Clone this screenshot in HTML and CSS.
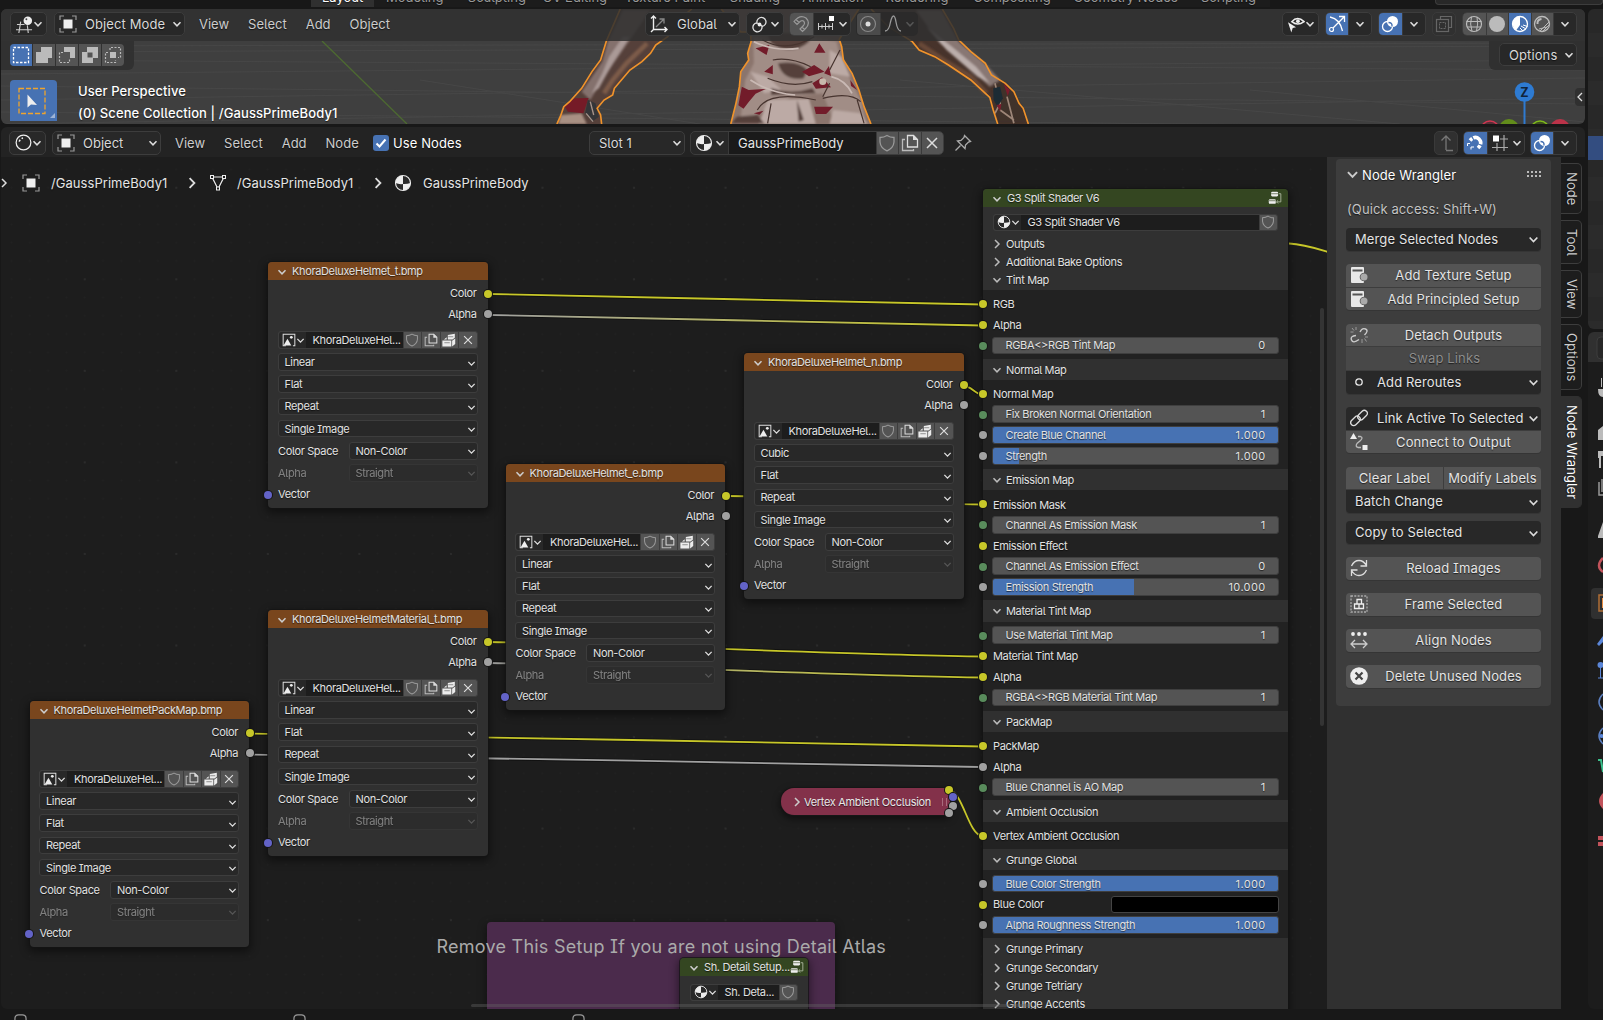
FILE: index.html
```html
<!DOCTYPE html>
<html lang="en">
<head>
<meta charset="utf-8">
<title>Shader Editor</title>
<link rel="stylesheet" href="styles.css">
</head>
<body>
<svg class="defs" width="0" height="0">
  <symbol id="chev" viewBox="0 0 10 10"><path d="M1.500 3.200 5 6.800 8.500 3.200" fill="none" stroke="currentColor" stroke-width="1.500"/></symbol>
  <symbol id="chevR" viewBox="0 0 10 10"><path d="M3 1 7 5 3 9" fill="none" stroke="currentColor" stroke-width="1.500"/></symbol>
  <symbol id="chevL" viewBox="0 0 10 10"><path d="M7 1 3 5 7 9" fill="none" stroke="currentColor" stroke-width="1.300"/></symbol>
  <symbol id="obj" viewBox="0 0 18 18"><path d="M1 5V1h4M13 1h4v4M17 13v4h-4M5 17H1v-4" fill="none" stroke="#999" stroke-width="1.200"/><rect x="4.500" y="4.500" width="9" height="9" fill="#eee"/></symbol>
  <symbol id="mesh" viewBox="0 0 18 18"><path d="M3 3h12L9 15z" fill="none" stroke="#eee" stroke-width="1.200"/><g fill="#1d1d1d" stroke="#eee"><rect x="1.500" y="1.500" width="3" height="3"/><rect x="13.500" y="1.500" width="3" height="3"/><rect x="7.500" y="13" width="3" height="3"/></g></symbol>
  <symbol id="mat" viewBox="0 0 18 18"><circle cx="9" cy="9" r="7.500" fill="#2a2a2a" stroke="#e8e8e8" stroke-width="1.200"/><path d="M9 1.500A7.500 7.500 0 0 0 1.500 9Q5 10.500 9 10zM9 10v6.500A7.500 7.500 0 0 0 16.500 9Q13 10.300 9 10z" fill="#eee"/></symbol>
  <symbol id="ring" viewBox="0 0 18 18"><circle cx="9" cy="9" r="7.800" fill="none" stroke="#eee" stroke-width="1.300"/><path d="M4.500 8A5 5 0 0 1 5.500 6M7 4.800A5 5 0 0 1 8.500 4.200" fill="none" stroke="#eee" stroke-width="1.600"/></symbol>
  <symbol id="grid3d" viewBox="0 0 18 18"><path d="M1 9h8M0 14.500h17M5 6 3 18M12 10l1 8" fill="none" stroke="#ccc" stroke-width="1.200"/><circle cx="12.500" cy="5" r="4.500" fill="#eee"/><circle cx="11" cy="3.500" r="1" fill="#444"/></symbol>
  <symbol id="shield" viewBox="0 0 18 18"><path d="M9 1.500Q12 3.500 16 3.500V8Q15.500 14 9 16.800 2.500 14 2 8V3.500Q6 3.500 9 1.500z" fill="none" stroke="#999" stroke-width="1.300"/></symbol>
  <symbol id="copy" viewBox="0 0 18 18"><path d="M6.500 1.500h6l4 4v7.500h-10z" fill="none" stroke="#ddd" stroke-width="1.300"/><path d="M12 1v5h5z" fill="#ddd"/><path d="M4 5.500H1.500v11h11V15" fill="none" stroke="#bbb" stroke-width="1.300"/></symbol>
  <symbol id="pack" viewBox="0 0 18 18"><path d="M7.500 2.500 16.500 1v5l-3 2.500h-6zM.5 9.500h11.500v8H.5zM13 10l4-3v7l-4 3.500zM2.500 8.500l3.500-3v3z" fill="#ececec"/><path d="M8 4.800h6.500M3 12.500h7" stroke="#777"/></symbol>
  <symbol id="x" viewBox="0 0 18 18"><path d="m4 4 10 10M14 4 4 14" stroke="#ddd" stroke-width="1.500"/></symbol>
  <symbol id="img" viewBox="0 0 18 18"><path d="M5 16.500H1.500v-15h15v15H14" fill="none" stroke="#ddd" stroke-width="1.300"/><path d="M2 16 7 7.500l5 8.500z" fill="#eee"/><circle cx="12" cy="5.500" r="1.800" fill="#eee"/></symbol>
  <symbol id="group" viewBox="0 0 18 18"><rect x="4" y="1" width="9" height="6" rx="1.500" fill="#eee"/><rect x="1" y="10.500" width="9" height="6" rx="1.500" fill="#eee"/><path d="M4 3.500h9M1 12.500h9" stroke="#344621" stroke-width=".8"/><path d="M14 3.500h2.500v10.500H11m2-2-2 2 2 2" fill="none" stroke="#aab59c" stroke-width="1.200"/></symbol>
  <symbol id="pin" viewBox="0 0 18 18"><path d="m10.500 1.500 6 6-2 .5-3 3-.5 3.500-7.500-7.500L7 6.500l3-3zM6.500 11.500 1.500 16.500" fill="none" stroke="#aaa" stroke-width="1.300"/></symbol>
  <symbol id="axes" viewBox="0 0 18 18"><path d="M3.500 1v13.500H17M1 3.500 3.500 1 6 3.500M14.500 12 17 14.500 14.500 17M1 17l2.500-2.500" fill="none" stroke="#eee" stroke-width="1.400"/><path d="m6 12 8-8M9.500 4H14v4.500" fill="none" stroke="#888" stroke-width="1.300"/></symbol>
  <symbol id="pivot" viewBox="0 0 18 18"><path d="M6.800 8.500A4.800 4.800 0 1 1 12 11M11 9.500A4.800 4.800 0 1 1 6 7.200" fill="none" stroke="#ddd" stroke-width="1.400"/><circle cx="9" cy="9" r="2" fill="#eee"/></symbol>
  <symbol id="magnet" viewBox="0 0 18 18"><path d="M2 6.500Q8-1 14 3 19 8 13.500 13.500L10.500 16.500 8 14l3.500-3.500Q13.500 8 11.500 6 9.500 5 7.500 7L5 9.500zM4 4.500 7 7.500M10 12l3 3" fill="none" stroke="currentColor" stroke-width="1.200"/></symbol>
  <symbol id="magnetOn" viewBox="0 0 18 18"><path d="M4 6.500Q9 1 13 5t-1 9" fill="none" stroke="#fff" stroke-width="3.600" stroke-dasharray="3 1.200 12 1.200 5"/><path d="M1.500 12V9.500H4M5 15.500v-2.500h3" fill="none" stroke="#fff"/></symbol>
  <symbol id="incr" viewBox="0 0 18 18"><path d="M1 11.500h15M1.500 8v7M5 9.500v4M8.500 8v7M12 9.500v4M15.500 8v7" stroke="#ccc" fill="none"/><rect x="12" y="1" width="5" height="5" fill="#fff"/></symbol>
  <symbol id="prop" viewBox="0 0 18 18"><circle cx="9" cy="9" r="7.500" fill="none" stroke="#888" stroke-width="1.200"/><circle cx="9" cy="9" r="2.500" fill="#ddd"/></symbol>
  <symbol id="falloff" viewBox="0 0 18 18"><path d="M1 16Q5 16 6.500 7 8 1 9.500 1T12 7Q13.500 16 17 16" fill="none" stroke="#999" stroke-width="1.300"/></symbol>
  <symbol id="eye" viewBox="0 0 18 18"><path d="M4 6Q10-.5 17 6 10 11 4 6z" fill="none" stroke="#eee" stroke-width="1.600"/><circle cx="10.500" cy="5.500" r="2" fill="#eee"/><path d="M0 6.500 8.500 12l-3.500.8L3.500 17.500z" fill="#eee"/></symbol>
  <symbol id="gizmo" viewBox="0 0 18 18"><path d="M2 2Q12 4 14.500 16M4 14 16 2M11 1.500h5.500V7" fill="none" stroke="#fff" stroke-width="1.300"/><circle cx="3.500" cy="14.500" r="2" fill="#4772b3" stroke="#fff" stroke-width="1.200"/></symbol>
  <symbol id="over" viewBox="0 0 18 18"><circle cx="11.500" cy="6.500" r="5.500" fill="#fff"/><circle cx="6.500" cy="11.500" r="5" fill="none" stroke="#fff" stroke-width="1.300"/><path d="M7.500 7.500Q11.500 7.500 11 11.500" fill="none" stroke="#4772b3" stroke-width="1.400"/></symbol>
  <symbol id="xray" viewBox="0 0 18 18"><path d="M5.500 4V1.500h11v11H14" fill="none" stroke="#666" stroke-width="1.200"/><rect x="1.500" y="4.500" width="12" height="12" fill="none" stroke="#666" stroke-width="1.200"/><rect x="4.500" y="7.500" width="6" height="6" fill="none" stroke="#666" stroke-dasharray="2 1"/></symbol>
  <symbol id="wire" viewBox="0 0 18 18"><circle cx="9" cy="9" r="7.500" fill="none" stroke="#bbb" stroke-width="1.200"/><path d="M1.500 6.500h15M2 12h14M6.500 1.800Q4.500 9 7 16.300M12 2q1.500 7-.5 14" fill="none" stroke="#bbb"/></symbol>
  <symbol id="solid" viewBox="0 0 18 18"><circle cx="9" cy="9" r="8" fill="#bbb"/></symbol>
  <symbol id="matprev" viewBox="0 0 18 18"><circle cx="9" cy="9" r="7.500" fill="none" stroke="#fff" stroke-width="1.300"/><path d="M9 1.500A7.500 7.500 0 0 0 1.500 9Q2 13 5 15.500L9 10z" fill="#fff"/><path d="m10 11 5 3M9 13l3 3M12 10l4.500 1.500" stroke="#fff"/></symbol>
  <symbol id="rend" viewBox="0 0 18 18"><circle cx="9" cy="9" r="7.500" fill="none" stroke="#bbb" stroke-width="1.300"/><path d="M4.500 9Q4 4.500 8.500 4" fill="none" stroke="#bbb" stroke-width="2"/><path d="m7 16 9-9M10 16l6-6M6 14l8-2" stroke="#bbb" stroke-width="1"/></symbol>
  <symbol id="up" viewBox="0 0 18 18"><path d="M9 16V2M4.500 6.500 9 2l4.500 4.500M9 16.500h7" fill="none" stroke="#777" stroke-width="1.300"/></symbol>
  <symbol id="snapgrid" viewBox="0 0 18 18"><path d="M6 17V9M1 13.500h16M13 1v16M9 5h8" fill="none" stroke="#aaa" stroke-width="1.200"/><rect x="2" y="1.500" width="6" height="6" fill="#fff"/></symbol>
  <symbol id="tex" viewBox="0 0 18 18"><rect x="1" y="1" width="13" height="16" rx="1" fill="#e8e8e8"/><path d="M2.500 3.500h10v2h-10z" fill="#555"/><circle cx="14" cy="11" r="4.300" fill="#545454"/><circle cx="14" cy="11" r="3.500" fill="#aaa"/></symbol>
  <symbol id="unlink" viewBox="0 0 18 18"><path d="M10 6Q12 1.500 15.500 3T14.500 9M6 9.500Q0 10 1.500 14T9 13.500" fill="none" stroke="#ccc" stroke-width="1.400"/><path d="M6 1v3M2 2l2 2.500M.5 6h3M12 13v4M14.500 12.500l2 3M15 11h3" stroke="#999"/></symbol>
  <symbol id="dot" viewBox="0 0 18 18"><circle cx="9" cy="9" r="3.200" fill="none" stroke="#e8e8e8" stroke-width="1.300"/></symbol>
  <symbol id="link" viewBox="0 0 18 18"><g fill="none" stroke="#ddd" stroke-width="1.300" transform="rotate(-45 9 9)"><rect x="-1" y="5.500" width="11" height="6" rx="3"/><rect x="8" y="6.500" width="11" height="6" rx="3"/></g></symbol>
  <symbol id="conn" viewBox="0 0 18 18"><path d="M0 6 3.500 0 7 6z" fill="#eee"/><rect x="12.500" y="12" width="5" height="5" fill="#eee"/><path d="M8 3.500h2.500q3 1 0 4L7 10.500q-2 3 1 4h3" fill="none" stroke="#bbb" stroke-width="1.300"/></symbol>
  <symbol id="reload" viewBox="0 0 18 18"><path d="M1.500 7Q4 1.500 9 1.500 13.500 1.500 16.500 6.500M16.500 1v6h-6M16.500 11Q14 16.500 9 16.500 4.500 16.500 1.500 11.500M1.500 17v-6h6" fill="none" stroke="#ddd" stroke-width="1.300"/></symbol>
  <symbol id="frame" viewBox="0 0 18 18"><rect x="1" y="1" width="16" height="16" fill="none" stroke="#aaa" stroke-width="1.300" stroke-dasharray="2 1.300"/><path d="M7 4.500h4.500V9H7zM4.500 9H9v4.500H4.500zM9 9h4.500v4.500H9z" fill="none" stroke="#eee" stroke-width="1.300"/></symbol>
  <symbol id="align" viewBox="0 0 18 18"><g fill="#eee"><circle cx="3" cy="3" r="1.900"/><circle cx="9" cy="3" r="1.900"/><circle cx="15" cy="3" r="1.900"/></g><path d="M1 13h16M5 9l-4 4 4 4M13 9l4 4-4 4" fill="none" stroke="#ccc" stroke-width="1.300"/></symbol>
  <symbol id="del" viewBox="0 0 18 18"><circle cx="9" cy="9" r="8.800" fill="#eee"/><path d="m5.500 5.500 7 7M12.500 5.500l-7 7" stroke="#444" stroke-width="2.200"/></symbol>
  <symbol id="mouse" viewBox="0 0 14 14"><path d="M1 14V5q0-4 4-4h4q4 0 4 4v9" fill="none" stroke="#999" stroke-width="1.300"/></symbol>
</svg>

<div class="app">
  <div class="topbar">
    <div class="ws active w1">Layout</div><div class="ws w2">Modeling</div><div class="ws w3">Sculpting</div><div class="ws w4">UV Editing</div><div class="ws w5">Texture Paint</div><div class="ws w6">Shading</div><div class="ws w7">Animation</div><div class="ws w8">Rendering</div><div class="ws w9">Compositing</div><div class="ws w10">Geometry Nodes</div><div class="ws w11">Scripting</div>
    <div class="scene"></div>
  </div>

  <div class="main">
    <div class="left">
      <section class="viewport">
        <svg class="scene3d" viewBox="1 9 1584 115" width="1584" height="115">
          <defs><filter id="soft" x="-5%" y="-5%" width="110%" height="110%"><feGaussianBlur stdDeviation="3"/></filter></defs>
          <rect x="1" y="9" width="1584" height="115" fill="#3f3f3f"/>
          <g stroke="#474747" stroke-width="1" fill="none">
            <path d="M1 46 1585 43M1 52 1585 46M1 60 1585 70M1 74 1585 60M1 86 1585 104M1 100 1585 78M1 112 1585 128M1 124 1585 98M420 80 700 124M900 80 1400 124M1250 90 1585 122"/>
          </g>
          <path d="M322 41 407 124" stroke="#4d6a31" stroke-width="1.300"/>
          <g transform="translate(530 0) scale(.3444 .3333)">
            <path d="M262 27 240 80 222 122 205 180 180 215 150 265 115 305 98 320 88 350 78 372H208L205 345 195 325 215 300 240 285 245 265 290 210 325 185 350 160 365 135 400 110 430 60 470 27z" fill="#55403a"/>
            <path d="M555 27 612 96H640L642 125 632 160 635 180 612 215 608 260 598 310 583 372H990L970 320 955 270 935 220 910 180 905 140 898 118 955 27z" fill="#8b756d"/>
            <path d="M990 27 1040 80 1110 125 1130 150 1215 195 1280 240 1335 292 1345 330 1358 372H1447L1432 325 1405 275 1380 250 1340 225 1322 190 1280 155 1245 120 1230 85 1197 27z" fill="#47332b"/>
            <g filter="url(#soft)">
              <path d="M270 30 226 125 210 185 150 275 175 300 210 240 250 180 290 120 350 30z" fill="#84716d"/>
              <path d="m270 110-40 60-20 50-30 60 20-15 40-75 50-80z" fill="#aa9a97"/>
              <path d="M340 130 280 190 240 240 215 280" stroke="#7d5b48" stroke-width="14" fill="none"/>
              <path d="M90 345 150 340 165 372H82z" fill="#a89083"/>
              <path d="M648 110 720 130 810 110 890 125 905 190 930 240 960 300 975 370 880 360 850 280 760 290 660 340 610 370 625 240 650 190z" fill="#a18d86"/>
              <path d="M690 300 810 296 830 372H665zM880 330 960 340 980 372H870zM870 150 905 170 930 230 870 220zM640 215 690 230 730 270 680 280z" fill="#bcaaa5"/>
              <path d="M700 130q60 40 110-5l10-25H690zM720 190q60-10 85 20l-10 25q-60 10-75-45zM700 265q60 20 120 0l10 15-130 5zM775 300l20 60-15 5zM600 350l60-5 20 25h-95z" fill="#54413b"/>
              <path d="M1120 30 1190 130 1260 190 1335 260 1365 240 1320 190 1245 125 1195 30z" fill="#887773"/>
              <path d="m1150 80 60 70 90 80 35 20-40-50-70-60z" fill="#bbaeab"/>
              <path d="m1130 130 70 50 80 50 45 50" stroke="#694a38" stroke-width="14" fill="none"/>
              <path d="m1345 250 35-5 25 40 30 50 5 35h-80l-12-50z" fill="#40302b"/>
            </g>
            <path d="M100 318 130 295 170 294 155 340 110 335z" fill="#751b27"/>
            <path d="M168 300 190 310 200 350 180 365 160 340z" fill="#343538"/><path d="m175 305 10 40M163 340l20 25" stroke="#a59289" stroke-width="4"/>
            <g fill="#721c2a"><path d="m655 145 40-10-8 30zM840 130l18 28h-33zM680 215l25-20v28zM790 215l35-20 30 20-45 14zM868 198l-14 22 20 8zM615 260l20 10 50-3-30 14-20 25-15 20-15-10zM820 250l28-18 26 30-44 4zM825 320h55l-20 22h-30zM650 340l28-8-12 12zM930 240l20 30-18-12z"/></g>
            <g fill="none" stroke="#47342f" stroke-width="3.500"><path d="M675 120q70 40 150-10M705 180q50-10 110 20M690 235q70 30 130 10M660 330q30-60 170-30M850 295q80-20 110 10M900 150l-30 60M700 310l-10 60M950 300l20 70M870 250l-20 40"/></g>
            <path d="M650 125q60 30 130 20M640 240q60 40 130 45M875 230q40 10 60 50" fill="none" stroke="#c9b9b4" stroke-width="5"/>
            <circle cx="850" cy="245" r="10" fill="#c7b8ac"/>
            <path d="m1350 250 15 60-15 30M1385 290l20 80M1365 330l40 30" stroke="#9d8678" stroke-width="5" fill="none"/><path d="m1345 265 20-5 8 35-15 25-12-20z" fill="#1c2b34"/><path d="m1375 250 18 20-6 18zM1355 315l14-3-4 22z" fill="#7c1b2c"/>
            <g fill="none" stroke="#f0932b" stroke-width="4.800">
              <path d="M262 27 240 80 222 122 205 180 180 215 150 265 115 305 98 320 88 350 78 372M208 372 205 345 195 325 215 300 240 285 245 265 290 210 325 185 350 160 365 135 400 110 430 60 470 27"/>
              <path d="M555 27 612 96H640L642 125 632 160 635 180 612 215 608 260 598 310 583 372M990 372 970 320 955 270 935 220 910 180 905 140 898 118 955 27"/>
              <path d="M990 27 1040 80 1110 125 1130 150 1175 170 1215 195 1280 240 1335 292 1345 330 1358 372M1447 372 1432 325 1420 310 1405 275 1380 250 1340 225 1322 190 1280 155 1245 120 1230 85 1197 27"/>
            </g>
          </g>
          <path d="M1524.500 92V124" stroke="#2f7ad0" stroke-width="2"/>
          <circle cx="1524.500" cy="92" r="9.800" fill="#2e7bd2"/>
          <circle cx="1490" cy="130" r="9" fill="#5a2f38" stroke="#cf3650" stroke-width="1.500"/><circle cx="1509" cy="129" r="10" fill="#628c1b"/><circle cx="1540" cy="130" r="9" fill="#3e521d" stroke="#7fb91c" stroke-width="1.500"/><circle cx="1560" cy="129" r="10" fill="#bb3349"/>
          <text x="1520.300" y="96.500" class="ztext">Z</text>
        </svg>
        <header class="bar vhead">
          <div class="btn ed"><svg class="i18"><use href="#grid3d"/></svg><svg class="c"><use href="#chev"/></svg></div>
          <div class="btn mode"><svg class="i18"><use href="#obj"/></svg><span>Object Mode</span><svg class="c"><use href="#chev"/></svg></div>
          <nav class="menu vm"><span>View</span><span>Select</span><span>Add</span><span>Object</span></nav>
          <div class="mid">
            <div class="btn glob"><svg class="i18"><use href="#axes"/></svg><span>Global</span><svg class="c"><use href="#chev"/></svg></div>
            <div class="btn piv"><svg class="i18"><use href="#pivot"/></svg><svg class="c"><use href="#chev"/></svg></div>
            <div class="btn seg"><div class="cell g dim"><svg class="i18"><use href="#magnet"/></svg></div><div class="cell w38"><svg class="i18"><use href="#incr"/></svg><svg class="c"><use href="#chev"/></svg></div></div>
            <div class="btn seg fade"><div class="cell g"><svg class="i18"><use href="#prop"/></svg></div><div class="cell w38"><svg class="i18"><use href="#falloff"/></svg><svg class="c"><use href="#chev"/></svg></div></div>
          </div>
          <div class="vright">
            <div class="btn ed"><svg class="i18"><use href="#eye"/></svg><svg class="c"><use href="#chev"/></svg></div>
            <div class="btn seg"><div class="cell b"><svg class="i18"><use href="#gizmo"/></svg></div><div class="cell w24"><svg class="c"><use href="#chev"/></svg></div></div>
            <div class="btn seg"><div class="cell b"><svg class="i18"><use href="#over"/></svg></div><div class="cell w24"><svg class="c"><use href="#chev"/></svg></div></div>
            <div class="btn seg xr"><div class="cell"><svg class="i18"><use href="#xray"/></svg></div></div>
            <div class="btn seg"><div class="cell g"><svg class="i18"><use href="#wire"/></svg></div><div class="cell g"><svg class="i18"><use href="#solid"/></svg></div><div class="cell b"><svg class="i18"><use href="#matprev"/></svg></div><div class="cell g"><svg class="i18"><use href="#rend"/></svg></div><div class="cell w24"><svg class="c"><use href="#chev"/></svg></div></div>
          </div>
        </header>
        <div class="vtools">
          <div class="selmodes">
            <div class="sm on"><svg class="i18" viewBox="0 0 18 18"><rect x="1.500" y="1.500" width="15" height="15" fill="none" stroke="#fff" stroke-width="1.300" stroke-dasharray="2.500 1.500"/></svg></div>
            <div class="sm"><svg class="i18" viewBox="0 0 18 18"><path d="M6 1h11v11h-4v5H1V6h5z" fill="#bbb"/></svg></div>
            <div class="sm"><svg class="i18" viewBox="0 0 18 18"><path d="M6 1h11v11h-5V6H6z" fill="#bbb"/><path d="M5 6.500H1.500v10h10V13" fill="none" stroke="#bbb" stroke-width="1.200" stroke-dasharray="2 1.500"/></svg></div>
            <div class="sm"><svg class="i18" viewBox="0 0 18 18"><path fill-rule="evenodd" d="M6 1h11v11h-5v5H1V6h5zM6.500 6.500v5h5v-5z" fill="#bbb"/></svg></div>
            <div class="sm"><svg class="i18" viewBox="0 0 18 18"><path d="M6 6h6v6H6z" fill="#bbb"/><path d="M6 4V1.500h10.500v10H14M4 6.500H1.500v10h10V14" fill="none" stroke="#bbb" stroke-width="1.200" stroke-dasharray="2 1.500"/></svg></div>
          </div>
          <div class="opts"><div class="btn"><span>Options</span><svg class="c"><use href="#chev"/></svg></div></div>
        </div>
        <div class="vinfo">
          <div class="tool"><svg width="47" height="40" viewBox="0 0 47 40"><rect x="9" y="8.500" width="26" height="25" fill="none" stroke="#f0a42c" stroke-width="1.300" stroke-dasharray="5 2"/><path d="M17.500 14.500v13l3.500-3 6 .5z" fill="#eee"/><path d="M45 33v5h-5z" fill="#9db3d6"/></svg></div>
          <div class="persp"><p>User Perspective</p><p>(0) Scene Collection | /GaussPrimeBody1</p></div>
        </div>
        <div class="npull"><svg class="c"><use href="#chevL"/></svg></div>
      </section>

      <section class="editor">
        <header class="bar nhead">
          <div class="btn ed"><svg class="i18"><use href="#ring"/></svg><svg class="c"><use href="#chev"/></svg></div>
          <div class="btn objsel"><svg class="i18"><use href="#obj"/></svg><span>Object</span><svg class="c"><use href="#chev"/></svg></div>
          <nav class="menu nm"><span>View</span><span>Select</span><span>Add</span><span>Node</span></nav>
          <div class="check"><svg width="16" height="16" viewBox="0 0 16 16"><path d="m3.500 8.500 3 3 6-7" fill="none" stroke="#fff" stroke-width="2"/></svg></div><span class="bright">Use Nodes</span>
          <div class="btn slot"><span>Slot 1</span><svg class="c"><use href="#chev"/></svg></div>
          <div class="btn seg matsel"><div class="cell w37"><svg class="i18"><use href="#mat"/></svg><svg class="c"><use href="#chev"/></svg></div><div class="cell name">GaussPrimeBody</div><div class="cell g"><svg class="i18"><use href="#shield"/></svg></div><div class="cell g"><svg class="i18"><use href="#copy"/></svg></div><div class="cell g"><svg class="i18"><use href="#x"/></svg></div></div>
          <svg class="i18 pinic"><use href="#pin"/></svg>
          <div class="nright">
            <div class="btn seg xr"><div class="cell"><svg class="i18"><use href="#up"/></svg></div></div>
            <div class="btn seg"><div class="cell b"><svg class="i18"><use href="#magnetOn"/></svg></div><div class="cell w38"><svg class="i18"><use href="#snapgrid"/></svg><svg class="c"><use href="#chev"/></svg></div></div>
            <div class="btn seg"><div class="cell b"><svg class="i18"><use href="#over"/></svg></div><div class="cell w24"><svg class="c"><use href="#chev"/></svg></div></div>
          </div>
        </header>

        <div class="nbody">
          <div class="canvas">
            <div class="crumbs"><svg class="c"><use href="#chevR"/></svg><svg class="i18 k1"><use href="#obj"/></svg><span class="t1">/GaussPrimeBody1</span><svg class="cr"><use href="#chevR"/></svg><svg class="i18 k2"><use href="#mesh"/></svg><span class="t1">/GaussPrimeBody1</span><svg class="cr"><use href="#chevR"/></svg><svg class="i18 k3"><use href="#mat"/></svg><span>GaussPrimeBody</span></div>

            <div class="nframe"></div>
            <svg class="links" viewBox="1 157 1326 852" width="1326" height="852">
              <defs><linearGradient id="mix" gradientUnits="userSpaceOnUse" x1="488" y1="0" x2="983" y2="0"><stop offset="0" stop-color="#a1a1a1"/><stop offset="1" stop-color="#c7c729"/></linearGradient></defs>
              <g fill="none" stroke="#111" stroke-width="3.500"><path d="M488 294C600 295 870 303.500 982 304.500M488 315C600 316 870 324.500 982 325.500M964 385.500C972 387 975 394 982 394.500M725 496C800 496.500 900 504 982 504.500M488 642C600 643.500 870 655.500 982 656.500M488 663C600 664.500 870 676.500 982 677.500M249 733.500C400 734.500 800 744 982 746.500M249 754.500C400 755.500 800 764.500 982 767"/></g>
              <g fill="none" stroke="#c7c729" stroke-width="1.800">
                <path d="M488 294C600 295 870 303.500 982 304.500"/><path d="M488 315C600 316 870 324.500 982 325.500" stroke="url(#mix)"/>
                <path d="M964 385.500C972 387 975 394 982 394.500M725 496C800 496.500 900 504 982 504.500M488 642C600 643.500 870 655.500 982 656.500M249 733.500C400 734.500 800 744 982 746.500M949 790C963 792 968 834 982 836M1289 243.500C1303 244 1315 248 1328 252"/>
                <path d="M488 663C600 664.500 870 676.500 982 677.500" stroke="url(#mix)"/>
                <path d="M249 754.500C400 755.500 800 764.500 982 767" stroke="#a1a1a1"/>
              </g>
            </svg>

            <div class="node tex n1">
              <div class="nh"><svg class="c"><use href="#chev"/></svg>KhoraDeluxeHelmet_t.bmp</div>
              <div class="out">Color<i class="s y"></i></div><div class="out">Alpha<i class="s g"></i></div>
              <div class="id"><div class="ic"><svg><use href="#img"/></svg><svg class="c"><use href="#chev"/></svg></div><div class="nm2">KhoraDeluxeHel...</div><div class="ib"><svg><use href="#shield"/></svg></div><div class="ib"><svg><use href="#copy"/></svg></div><div class="ib"><svg><use href="#pack"/></svg></div><div class="ib"><svg><use href="#x"/></svg></div></div>
              <div class="dd">Linear<svg class="c"><use href="#chev"/></svg></div><div class="dd">Flat<svg class="c"><use href="#chev"/></svg></div><div class="dd">Repeat<svg class="c"><use href="#chev"/></svg></div><div class="dd">Single Image<svg class="c"><use href="#chev"/></svg></div>
              <div class="lr"><span>Color Space</span><div class="dd">Non-Color<svg class="c"><use href="#chev"/></svg></div></div>
              <div class="lr off"><span>Alpha</span><div class="dd">Straight<svg class="c"><use href="#chev"/></svg></div></div>
              <div class="in"><i class="s v"></i>Vector</div>
            </div>
            <div class="node tex n2">
              <div class="nh"><svg class="c"><use href="#chev"/></svg>KhoraDeluxeHelmetPackMap.bmp</div>
              <div class="out">Color<i class="s y"></i></div><div class="out">Alpha<i class="s g"></i></div>
              <div class="id"><div class="ic"><svg><use href="#img"/></svg><svg class="c"><use href="#chev"/></svg></div><div class="nm2">KhoraDeluxeHel...</div><div class="ib"><svg><use href="#shield"/></svg></div><div class="ib"><svg><use href="#copy"/></svg></div><div class="ib"><svg><use href="#pack"/></svg></div><div class="ib"><svg><use href="#x"/></svg></div></div>
              <div class="dd">Linear<svg class="c"><use href="#chev"/></svg></div><div class="dd">Flat<svg class="c"><use href="#chev"/></svg></div><div class="dd">Repeat<svg class="c"><use href="#chev"/></svg></div><div class="dd">Single Image<svg class="c"><use href="#chev"/></svg></div>
              <div class="lr"><span>Color Space</span><div class="dd">Non-Color<svg class="c"><use href="#chev"/></svg></div></div>
              <div class="lr off"><span>Alpha</span><div class="dd">Straight<svg class="c"><use href="#chev"/></svg></div></div>
              <div class="in"><i class="s v"></i>Vector</div>
            </div>
            <div class="node tex n3">
              <div class="nh"><svg class="c"><use href="#chev"/></svg>KhoraDeluxeHelmetMaterial_t.bmp</div>
              <div class="out">Color<i class="s y"></i></div><div class="out">Alpha<i class="s g"></i></div>
              <div class="id"><div class="ic"><svg><use href="#img"/></svg><svg class="c"><use href="#chev"/></svg></div><div class="nm2">KhoraDeluxeHel...</div><div class="ib"><svg><use href="#shield"/></svg></div><div class="ib"><svg><use href="#copy"/></svg></div><div class="ib"><svg><use href="#pack"/></svg></div><div class="ib"><svg><use href="#x"/></svg></div></div>
              <div class="dd">Linear<svg class="c"><use href="#chev"/></svg></div><div class="dd">Flat<svg class="c"><use href="#chev"/></svg></div><div class="dd">Repeat<svg class="c"><use href="#chev"/></svg></div><div class="dd">Single Image<svg class="c"><use href="#chev"/></svg></div>
              <div class="lr"><span>Color Space</span><div class="dd">Non-Color<svg class="c"><use href="#chev"/></svg></div></div>
              <div class="lr off"><span>Alpha</span><div class="dd">Straight<svg class="c"><use href="#chev"/></svg></div></div>
              <div class="in"><i class="s v"></i>Vector</div>
            </div>
            <div class="node tex n4">
              <div class="nh"><svg class="c"><use href="#chev"/></svg>KhoraDeluxeHelmet_e.bmp</div>
              <div class="out">Color<i class="s y"></i></div><div class="out">Alpha<i class="s g"></i></div>
              <div class="id"><div class="ic"><svg><use href="#img"/></svg><svg class="c"><use href="#chev"/></svg></div><div class="nm2">KhoraDeluxeHel...</div><div class="ib"><svg><use href="#shield"/></svg></div><div class="ib"><svg><use href="#copy"/></svg></div><div class="ib"><svg><use href="#pack"/></svg></div><div class="ib"><svg><use href="#x"/></svg></div></div>
              <div class="dd">Linear<svg class="c"><use href="#chev"/></svg></div><div class="dd">Flat<svg class="c"><use href="#chev"/></svg></div><div class="dd">Repeat<svg class="c"><use href="#chev"/></svg></div><div class="dd">Single Image<svg class="c"><use href="#chev"/></svg></div>
              <div class="lr"><span>Color Space</span><div class="dd">Non-Color<svg class="c"><use href="#chev"/></svg></div></div>
              <div class="lr off"><span>Alpha</span><div class="dd">Straight<svg class="c"><use href="#chev"/></svg></div></div>
              <div class="in"><i class="s v"></i>Vector</div>
            </div>
            <div class="node tex n5">
              <div class="nh"><svg class="c"><use href="#chev"/></svg>KhoraDeluxeHelmet_n.bmp</div>
              <div class="out">Color<i class="s y"></i></div><div class="out">Alpha<i class="s g"></i></div>
              <div class="id"><div class="ic"><svg><use href="#img"/></svg><svg class="c"><use href="#chev"/></svg></div><div class="nm2">KhoraDeluxeHel...</div><div class="ib"><svg><use href="#shield"/></svg></div><div class="ib"><svg><use href="#copy"/></svg></div><div class="ib"><svg><use href="#pack"/></svg></div><div class="ib"><svg><use href="#x"/></svg></div></div>
              <div class="dd">Cubic<svg class="c"><use href="#chev"/></svg></div><div class="dd">Flat<svg class="c"><use href="#chev"/></svg></div><div class="dd">Repeat<svg class="c"><use href="#chev"/></svg></div><div class="dd">Single Image<svg class="c"><use href="#chev"/></svg></div>
              <div class="lr"><span>Color Space</span><div class="dd">Non-Color<svg class="c"><use href="#chev"/></svg></div></div>
              <div class="lr off"><span>Alpha</span><div class="dd">Straight<svg class="c"><use href="#chev"/></svg></div></div>
              <div class="in"><i class="s v"></i>Vector</div>
            </div>

            <div class="vao"><svg class="c"><use href="#chevR"/></svg><span>Vertex Ambient Occlusion</span><b></b><i class="s y a1"></i><i class="s v a2"></i><i class="s g a3"></i><i class="s g a4"></i></div>

            <div class="node det">
              <div class="nh gh"><svg class="c"><use href="#chev"/></svg>Sh. Detail Setup...<svg class="gi"><use href="#group"/></svg></div>
              <div class="id"><div class="ic"><svg><use href="#mat"/></svg><svg class="c"><use href="#chev"/></svg></div><div class="nm2">Sh. Deta...</div><div class="ib"><svg><use href="#shield"/></svg></div></div>
            </div>
            <div class="ftitle">Remove This Setup If you are not using Detail Atlas</div>

            <div class="node shader">
              <div class="nh gh"><svg class="c"><use href="#chev"/></svg>G3 Split Shader V6<svg class="gi"><use href="#group"/></svg></div>
              <div class="id"><div class="ic"><svg><use href="#mat"/></svg><svg class="c"><use href="#chev"/></svg></div><div class="nm2">G3 Split Shader V6</div><div class="ib"><svg><use href="#shield"/></svg></div></div>
              <div class="fold"><svg class="c"><use href="#chevR"/></svg>Outputs</div>
              <div class="fold"><svg class="c"><use href="#chevR"/></svg>Additional Bake Options</div>
              <div class="ph first"><svg class="c"><use href="#chev"/></svg>Tint Map</div>
              <div class="pb">
                <div class="r"><i class="s y"></i>RGB</div><div class="r"><i class="s y"></i>Alpha</div>
                <div class="r"><i class="s n"></i><div class="f"><span>RGBA&lt;&gt;RGB Tint Map</span><span>0</span></div></div>
              </div>
              <div class="ph"><svg class="c"><use href="#chev"/></svg>Normal Map</div>
              <div class="pb">
                <div class="r"><i class="s y"></i>Normal Map</div>
                <div class="r"><i class="s n"></i><div class="f"><span>Fix Broken Normal Orientation</span><span>1</span></div></div>
                <div class="r"><i class="s g"></i><div class="f full"><span>Create Blue Channel</span><span>1.000</span></div></div>
                <div class="r"><i class="s g"></i><div class="f p9"><span>Strength</span><span>1.000</span></div></div>
              </div>
              <div class="ph"><svg class="c"><use href="#chev"/></svg>Emission Map</div>
              <div class="pb">
                <div class="r"><i class="s y"></i>Emission Mask</div>
                <div class="r"><i class="s n"></i><div class="f"><span>Channel As Emission Mask</span><span>1</span></div></div>
                <div class="r"><i class="s y"></i>Emission Effect</div>
                <div class="r"><i class="s n"></i><div class="f"><span>Channel As Emission Effect</span><span>0</span></div></div>
                <div class="r"><i class="s g"></i><div class="f p50"><span>Emission Strength</span><span>10.000</span></div></div>
              </div>
              <div class="ph"><svg class="c"><use href="#chev"/></svg>Material Tint Map</div>
              <div class="pb">
                <div class="r"><i class="s n"></i><div class="f"><span>Use Material Tint Map</span><span>1</span></div></div>
                <div class="r"><i class="s y"></i>Material Tint Map</div><div class="r"><i class="s y"></i>Alpha</div>
                <div class="r"><i class="s n"></i><div class="f"><span>RGBA&lt;&gt;RGB Material Tint Map</span><span>1</span></div></div>
              </div>
              <div class="ph"><svg class="c"><use href="#chev"/></svg>PackMap</div>
              <div class="pb">
                <div class="r"><i class="s y"></i>PackMap</div><div class="r"><i class="s g"></i>Alpha</div>
                <div class="r"><i class="s n"></i><div class="f"><span>Blue Channel is AO Map</span><span>1</span></div></div>
              </div>
              <div class="ph"><svg class="c"><use href="#chev"/></svg>Ambient Occlusion</div>
              <div class="pb"><div class="r"><i class="s y"></i>Vertex Ambient Occlusion</div></div>
              <div class="ph"><svg class="c"><use href="#chev"/></svg>Grunge Global</div>
              <div class="pb">
                <div class="r"><i class="s g"></i><div class="f full"><span>Blue Color Strength</span><span>1.000</span></div></div>
                <div class="r"><i class="s y"></i>Blue Color<div class="swatch"></div></div>
                <div class="r"><i class="s g"></i><div class="f full"><span>Alpha Roughness Strength</span><span>1.000</span></div></div>
              </div>
              <div class="fold"><svg class="c"><use href="#chevR"/></svg>Grunge Primary</div>
              <div class="fold"><svg class="c"><use href="#chevR"/></svg>Grunge Secondary</div>
              <div class="fold"><svg class="c"><use href="#chevR"/></svg>Grunge Tetriary</div>
              <div class="fold"><svg class="c"><use href="#chevR"/></svg>Grunge Accents</div>
            </div>
            <div class="sbv"></div><div class="sbh"></div>
          </div>

          <aside class="side">
            <div class="panel">
              <div class="pt"><svg class="pc"><use href="#chev"/></svg>Node Wrangler<span class="grip"></span></div>
              <p>(Quick access: Shift+W)</p>
              <div class="grp"><div class="pr dk"><span>Merge Selected Nodes</span><svg class="c"><use href="#chev"/></svg></div></div>
              <div class="grp"><div class="pr"><svg class="i18"><use href="#tex"/></svg><em>Add Texture Setup</em></div><div class="pr"><svg class="i18"><use href="#tex"/></svg><em>Add Principled Setup</em></div></div>
              <div class="grp"><div class="pr"><svg class="i18"><use href="#unlink"/></svg><em>Detach Outputs</em></div><div class="pr dis"><em>Swap Links</em></div><div class="pr dk"><svg class="i18"><use href="#dot"/></svg><span>Add Reroutes</span><svg class="c"><use href="#chev"/></svg></div></div>
              <div class="grp"><div class="pr dk"><svg class="i18"><use href="#link"/></svg><span>Link Active To Selected</span><svg class="c"><use href="#chev"/></svg></div><div class="pr"><svg class="i18"><use href="#conn"/></svg><em>Connect to Output</em></div></div>
              <div class="grp"><div class="two"><div class="pr"><em>Clear Label</em></div><div class="pr"><em>Modify Labels</em></div></div><div class="pr dk"><span>Batch Change</span><svg class="c"><use href="#chev"/></svg></div></div>
              <div class="grp near"><div class="pr dk"><span>Copy to Selected</span><svg class="c"><use href="#chev"/></svg></div></div>
              <div class="grp"><div class="pr"><svg class="i18"><use href="#reload"/></svg><em>Reload Images</em></div></div>
              <div class="grp"><div class="pr"><svg class="i18"><use href="#frame"/></svg><em>Frame Selected</em></div></div>
              <div class="grp"><div class="pr"><svg class="i18"><use href="#align"/></svg><em>Align Nodes</em></div></div>
              <div class="grp"><div class="pr"><svg class="i18"><use href="#del"/></svg><em>Delete Unused Nodes</em></div></div>
            </div>
          </aside>
          <div class="tabs"><div class="tb b1">Node</div><div class="tb b2">Tool</div><div class="tb b3">View</div><div class="tb b4">Options</div><div class="tb b5">Node Wrangler</div></div>
        </div>
      </section>
    </div>

    <div class="right">
      <div class="outliner"><div class="orow"></div></div>
      <div class="props">
        <svg width="15" height="677" viewBox="0 0 15 677">
          <rect width="15" height="30" fill="#303030"/><rect x="9" y="5" width="20" height="22" rx="4" fill="#282828" stroke="#3d3d3d"/>
          <rect x="3" y="256" width="14" height="31" rx="4" fill="#303030"/>
          <g fill="#bbb"><path d="M14 46v9h-1v-9zM10 57h5v8q-5 0-5-8zM10 98l5-4v14h-5zM10 119h5v5h-2v12h-2v-10h-1zM10 204 15 190v16h-5z"/></g>
          <path d="M11 150v13h4M14 147v13" fill="none" stroke="#999" stroke-width="1.500"/>
          <path d="M15 226q-8 8 0 14" fill="none" stroke="#c2535b" stroke-width="2.500"/>
          <path d="M15 263h-4v16h4" fill="none" stroke="#b06e35" stroke-width="1.500"/><rect x="14" y="266" width="1" height="10" fill="#e98d42"/>
          <path d="m9 312 6-8v6l-4 4z" fill="#5b86d8"/>
          <circle cx="12.500" cy="333" r="3" fill="#5b86d8"/><path d="M12.500 334v12M10 346h5" stroke="#5b86d8" fill="none"/>
          <path d="M15 362q-8 8 0 16M15 396q-8 8 0 16" fill="none" stroke="#5b7fc0" stroke-width="1.500"/><circle cx="13.500" cy="404" r="2" fill="#5b86d8"/>
          <path d="M10 428h3l2 12" fill="none" stroke="#3bc08c" stroke-width="2"/>
          <path d="M15 461q-8 8 0 16z" fill="#c2535b"/><path d="M10 504h5v4h-5zM10 510h5v4h-5z" fill="#c2535b"/>
        </svg>
      </div>
    </div>
  </div>
  <footer class="status"><svg class="mo m1"><use href="#mouse"/></svg><svg class="mo m2"><use href="#mouse"/></svg><svg class="mo m3"><use href="#mouse"/></svg></footer>
</div>
</body>
</html>
```
FILE: styles.css
```css
* { box-sizing: border-box; }
body { margin: 0; background: #181818; overflow: hidden; }
.defs { position: absolute; }
svg { display: block; flex: none; }
.app {
  width: 1603px; height: 1020px; display: flex; flex-direction: column; overflow: hidden;
  font-family: Inter, "Liberation Sans", sans-serif; font-feature-settings: "cv05", "cv08";
  font-size: 13px; color: #d9d9d9; letter-spacing: 0; text-shadow: 0 1px 1px rgba(0,0,0,.6);
}
.i18 { width: 18px; height: 18px; }
.c { width: 10px; height: 10px; color: #ddd; }

.topbar { height: 9px; display: flex; padding-left: 311px; overflow: hidden; flex: none; }
.ws { height: 10px; margin-top: -3px; line-height: 0; display: flex; justify-content: center; color: #999; background: #1c1c1c; white-space: nowrap; }
.ws.active { background: #303030; color: #fff; }
.w1 { width: 64px; } .w2 { width: 82px; } .w3 { width: 84px; } .w4 { width: 74px; } .w5 { width: 108px; } .w6 { width: 74px; } .w7 { width: 84px; } .w8 { width: 86px; } .w9 { width: 106px; } .w10 { width: 124px; } .w11 { width: 84px; }
.scene { width: 170px; height: 5px; margin-left: 165px; background: #282828; border: 1px solid #3d3d3d; border-top: 0; border-radius: 0 0 4px 4px; }

.main { flex: 1; display: flex; gap: 3px; min-height: 0; }
.left { width: 1585px; padding-left: 1px; display: flex; flex-direction: column; gap: 3px; }
.viewport { height: 115px; position: relative; border-radius: 6px; overflow: hidden; flex: none; }
.scene3d { position: absolute; left: 0; top: 0; }
.ztext { font-size: 12.500px; font-weight: 700; fill: #10233b; text-shadow: none; letter-spacing: 0; }
.bar { display: flex; align-items: center; position: relative; }
.vhead { height: 32px; background: rgba(48,48,48,.86); padding: 0 8px 2px 9px; }
.btn { height: 24px; background: #282828; border: 1px solid #3d3d3d; border-radius: 5px; display: flex; align-items: center; white-space: nowrap; flex: none; }
.ed { width: 37px; padding: 0 3px 0 5px; justify-content: space-between; }
.ed .i18, .piv .i18 { width: 17px; height: 17px; }
.mode { width: 131px; margin-left: 7px; padding: 0 2px 0 4px; }
.mode span { margin: 0 auto 0 8px; letter-spacing: .1px; }
.menu { display: flex; color: #ccc; flex: none; }
.vm { margin-left: 14px; gap: 19px; width: 193px; }
.mid { display: flex; gap: 5.500px; margin-left: 253px; }
.glob { width: 95px; padding: 0 2px 0 4px; }
.glob span { margin: 0 auto 0 9px; }
.piv { width: 38px; padding: 0 3px 0 4px; justify-content: space-between; }
.seg { overflow: hidden; }
.cell { height: 22px; width: 22.500px; display: flex; align-items: center; justify-content: center; flex: none; }
.cell + .cell { border-left: 1px solid #3a3a3a; }
.cell.g { background: #545454; } .cell.b { background: #4772b3; }
.dim { color: #999; }
.cell.w38 { width: 37px; justify-content: space-between; padding: 0 2px 0 3px; }
.cell.w24 { width: 23px; } .cell.w37 { width: 37px; justify-content: space-between; padding: 0 3px 0 4px; }
.fade { background: rgba(40,40,40,.7); border-color: transparent; } .fade .c { color: #555; } .fade .cell.g { background: rgba(84,84,84,.8); }
.vright { display: flex; gap: 6px; margin-left: auto; }
.xr { background: #303030; border-color: #3a3a3a; }
.vtools { display: flex; justify-content: space-between; height: 29px; position: relative; }
.selmodes { display: flex; gap: 1px; background: rgba(48,48,48,.9); width: 133px; height: 29px; padding: 3px 0 3px 9px; border-radius: 0 0 6px 0; }
.sm { width: 22px; height: 22px; background: #545454; display: flex; align-items: center; justify-content: center; }
.sm.on { background: #4772b3; border-radius: 4px 0 0 4px; } .sm:last-child { border-radius: 0 4px 4px 0; }
.opts { width: 96px; background: #303030; padding: 2px 8px 0 10px; border-radius: 0 0 0 6px; }
.opts .btn { width: 78px; height: 23px; padding: 0 2px 0 9px; justify-content: space-between; letter-spacing: .1px; }
.vinfo { display: flex; position: relative; padding: 10px 0 0 9px; }
.tool { width: 47px; height: 41px; background: #4772b3; border-radius: 4px 4px 0 0; }
.persp { margin: 0 0 0 21px; color: #fff; }
.persp p { margin: 0; height: 22px; line-height: 22px; letter-spacing: .1px; font-weight: 500; }
.npull { position: absolute; right: 0; top: 79px; width: 10px; height: 18px; background: #303030; border-radius: 4px 0 0 4px; display: flex; align-items: center; }

.editor { flex: 1; display: flex; flex-direction: column; border-radius: 6px 6px 0 6px; overflow: hidden; background: #1d1d1d; min-height: 0; }
.nhead { height: 30px; background: #232323; padding: 1px 8px 0 8px; flex: none; }
.objsel { width: 109px; margin-left: 6px; padding: 0 2px 0 4px; }
.objsel span { margin: 0 auto 0 8px; }
.nm { margin-left: 14px; gap: 19px; width: 184px; }
.check { width: 16px; height: 16px; background: #4772b3; border-radius: 3px; margin: 0 4px 0 14px; flex: none; }
.bright { color: #fff; width: 196px; letter-spacing: .1px; }
.slot { width: 96px; padding: 0 2px 0 9px; justify-content: space-between; }
.matsel { width: 254px; margin-left: 5px; }
.matsel .name { flex: 1; background: #1a1a1a; justify-content: flex-start; padding-left: 9px; color: #e5e5e5; }
.pinic { margin-left: 10px; }
.nright { display: flex; gap: 5px; margin-left: auto; }
.nbody { flex: 1; display: flex; min-height: 0; }
.canvas {
  width: 1326px; position: relative; overflow: hidden; background-color: #1d1d1d;
  background-image: radial-gradient(circle, #2b2b2b 1px, transparent 1.500px), radial-gradient(circle, #212121 .7px, transparent 1.200px);
  background-size: 91.550px 91.550px, 18.310px 18.310px; background-position: 38px -15px, 1.400px 3.300px;
}
.crumbs { display: flex; align-items: center; height: 20px; margin-top: 16px; color: #e5e5e5; }
.crumbs .c { margin-left: -2px; }
.k1 { margin: 0 11px 0 13px; } .t1 { width: 130px; letter-spacing: .05px; } .t1 + .cr { margin-left: 5px; }
.cr { width: 12px; height: 12px; color: #ddd; } .k2 { margin: 0 10px 0 11px; } .k3 { margin: 0 11px 0 10px; }
.links { position: absolute; left: 0; top: 0; }

.node { position: absolute; background: #303030; border-radius: 4px; box-shadow: 0 0 0 1px rgba(20,20,20,.7), 0 3px 8px 2px rgba(0,0,0,.45); font-size: 11px; letter-spacing: -.36px; color: #e2e2e2; }
.nh { height: 18px; display: flex; align-items: center; background: #79461d; border-radius: 4px 4px 0 0; padding: 0 6px 1px 9px; white-space: nowrap; position: relative; }
.nh .c { margin: 2px 5px 0 0; color: #ccc; }
.gh { background: #344621; }
.gi { width: 14px; height: 14px; margin: 1px 0 0 auto; }
.tex { width: 219.500px; height: 246px; }
.n1 { left: 267px; top: 105px; } .n2 { left: 28.500px; top: 544px; } .n3 { left: 267px; top: 453px; } .n4 { left: 504.500px; top: 307px; } .n5 { left: 743px; top: 196px; }
.out { height: 20.750px; display: flex; align-items: center; justify-content: flex-end; padding: 2px 11px 0 0; position: relative; }
.nh + .out { margin-top: 2px; }
.s { position: absolute; width: 8px; height: 8px; border-radius: 50%; box-shadow: 0 0 0 1px #151515; }
.s.y { background: #c7c729; } .s.g { background: #a1a1a1; } .s.v { background: #6363c7; } .s.n { background: #598c5c; }
.out .s { right: -4.500px; top: 7.500px; }
.id { height: 17.700px; margin: 6.500px 10px 0 9.500px; border: 1px solid #3d3d3d; border-radius: 3px; background: #545454; display: flex; overflow: hidden; }
.out + .id { margin-top: 7.500px; }
.ic { width: 27px; background: #282828; display: flex; align-items: center; padding-left: 3px; }
.ic svg { width: 14px; height: 14px; } .ic .c { width: 9px; height: 9px; margin: 1px 0 0; }
.nm2 { flex: 1; background: #1d1d1d; display: flex; align-items: center; padding: 0 0 0 7px; white-space: nowrap; overflow: hidden; }
.ib { width: 18.500px; border-left: 1px solid #3d3d3d; display: flex; align-items: center; justify-content: center; flex: none; }
.ib svg { width: 14px; height: 14px; }
.dd { height: 17.700px; margin: 4.500px 10px 0 9.500px; border: 1px solid #3d3d3d; border-radius: 3px; background: #282828; display: flex; align-items: center; justify-content: space-between; padding: 0 1px 0 6px; }
.dd .c { width: 9px; height: 9px; margin-top: 2px; }
.lr { display: flex; margin-top: 4.500px; align-items: center; padding-left: 10px; }
.lr span { flex: 1; } .lr .dd { width: 129px; margin: 0 10px 0 0; }
.off { opacity: .45; } .off .c { opacity: .5; }
.in { height: 20.750px; margin-top: 1.500px; display: flex; align-items: center; padding-left: 10px; position: relative; }
.in .s { left: -4.500px; top: 7.500px; }

.vao { position: absolute; left: 780px; top: 631px; width: 169px; height: 27px; border-radius: 13px 5px 5px 13px; background: #83314a; display: flex; align-items: center; padding-left: 11px; font-size: 11px; letter-spacing: -.33px; color: #e8e8e8; box-shadow: 0 0 0 1px #161616, 0 3px 7px 1px rgba(0,0,0,.5); }
.vao .c { color: #ccc; margin-right: 2px; } .vao span { width: 138px; white-space: nowrap; }
.vao b { width: 5px; height: 8px; border: 1px solid #a86a7c; border-width: 0 1px; }
.a1 { left: 163.500px; top: -2px; } .a2 { left: 168px; top: 5px; } .a3 { left: 168px; top: 14px; } .a4 { left: 163.500px; top: 21px; }

.nframe { position: absolute; left: 486px; top: 765px; width: 348px; height: 100px; background: #4b2b4c; border-radius: 4px; box-shadow: 0 3px 9px 1px rgba(0,0,0,.4); }
.ftitle { position: absolute; left: 435.500px; top: 777px; line-height: 26px; font-size: 18px; letter-spacing: .24px; color: #aaa; white-space: nowrap; text-shadow: none; }
.det { left: 679px; top: 801px; width: 128px; height: 90px; }
.det .nh { padding-right: 5px; } .det .gi { margin-left: auto; }
.det .id { margin-top: 7.500px; }

.shader { left: 982px; top: 32px; width: 305px; height: 900px; }
.fold { height: 18.200px; display: flex; align-items: center; padding: 1px 0 0 9px; }
.fold .c, .ph .c { margin-right: 4px; color: #bbb; }
.id + .fold { margin-top: 2.800px; }
.pb + .fold { margin-top: 1.500px; }
.ph { height: 21.460px; display: flex; align-items: center; padding: 1px 0 0 9px; }
.ph.first { height: 19.900px; padding: 0 0 1px 9px; }
.pb { background: #222; padding: 3px 0; }
.r { height: 20.750px; display: flex; align-items: center; padding: 1.500px 9.500px 0 10px; position: relative; }
.r:has(.f), .r:has(.swatch) { padding-top: .5px; }
.r .s { left: -4.500px; top: 7px; }
.f { flex: 1; margin-left: -1px; height: 17.700px; border: 1px solid #3f3f3f; border-radius: 3px; background: #545454; display: flex; align-items: center; justify-content: space-between; padding: 0 12px 0 12.500px; }
.f span:last-child { letter-spacing: .35px; }
.full { background: #4772b3; } .p9 { background: linear-gradient(90deg, #4772b3 9.200%, #545454 0); } .p50 { background: linear-gradient(90deg, #4772b3 49.300%, #545454 0); }
.swatch { width: 168px; height: 17.700px; margin-left: auto; background: #000; border: 1px solid #444; border-radius: 3px; }
.sbv { position: absolute; left: 1319px; top: 151px; width: 4px; height: 418px; border-radius: 2px; background: #343434; }
.sbh { position: absolute; left: 470px; top: 847px; width: 560px; height: 3px; border-radius: 2px; background: rgba(100,100,100,.4); }

.side { width: 234px; background: #303030; padding: 2px 10px 0 9px; }
.panel { height: 547px; background: #3d3d3d; border-radius: 4px; padding: 0 10px; }
.pt { height: 31px; display: flex; align-items: center; color: #fff; letter-spacing: .1px; }
.pc { width: 13px; height: 13px; margin-right: 3px; color: #ccc; }
.grip { margin-left: auto; margin-top: -3px; width: 15px; height: 7px; background: radial-gradient(circle, #bbb 1px, transparent 1.200px) 0 0 / 4px 4px; }
.panel p { margin: 0; height: 38px; line-height: 39px; padding-left: 1px; color: #c4c4c4; letter-spacing: .1px; }
.grp { display: flex; flex-direction: column; gap: 1px; border-radius: 4px; overflow: hidden; margin-bottom: 13.300px; box-shadow: 0 1px 0 #353535; }
.grp:has(+ .near) { margin-bottom: 8.300px; }
.pr { height: 22.700px; background: #545454; display: flex; align-items: center; padding: 0 2px 1px 4px; color: #e5e5e5; letter-spacing: .12px; flex: none; }
.pr em { font-style: normal; flex: 1; text-align: center; }
.pr .c { margin-left: auto; margin-right: 0; width: 11px; height: 11px; margin-top: 2px; }
.dk { background: #282828; } .dk span { padding-left: 5px; white-space: nowrap; } .dk .i18 + span { padding-left: 9px; }
.dis { background: #484848; color: #8d8d8d; }
.two { display: flex; gap: 1px; } .two .pr { flex: 1; white-space: nowrap; padding: 0 0 1px; }
.tabs { width: 24px; background: #181818; padding-top: 6px; display: flex; flex-direction: column; gap: 6px; }
.tb { writing-mode: vertical-rl; width: 21px; line-height: 19px; background: #1d1d1d; border: 1px solid #3d3d3d; border-left: 0; border-radius: 0 5px 5px 0; text-align: center; color: #ccc; letter-spacing: .1px; }
.b1 { height: 51px; } .b2 { height: 44px; } .b3 { height: 48px; } .b4 { height: 66px; } .b5 { height: 112px; background: #303030; border-color: #303030; color: #fff; }

.right { width: 15px; display: flex; flex-direction: column; gap: 3px; }
.outliner { height: 320px; background: repeating-linear-gradient(#282828 0 24px, #2b2b2b 24px 48px); border-radius: 6px 0 0 6px; padding-top: 127px; flex: none; }
.orow { height: 24px; background: #334d80; }
.props { flex: 1; background: #1c1c1c; border-radius: 6px 0 0 6px; overflow: hidden; }
.status { height: 11px; display: flex; padding: 5px 0 0 14px; flex: none; overflow: hidden; }
.mo { width: 13px; height: 13px; } .m2 { margin-left: 266px; } .m3 { margin-left: 266px; }
```
